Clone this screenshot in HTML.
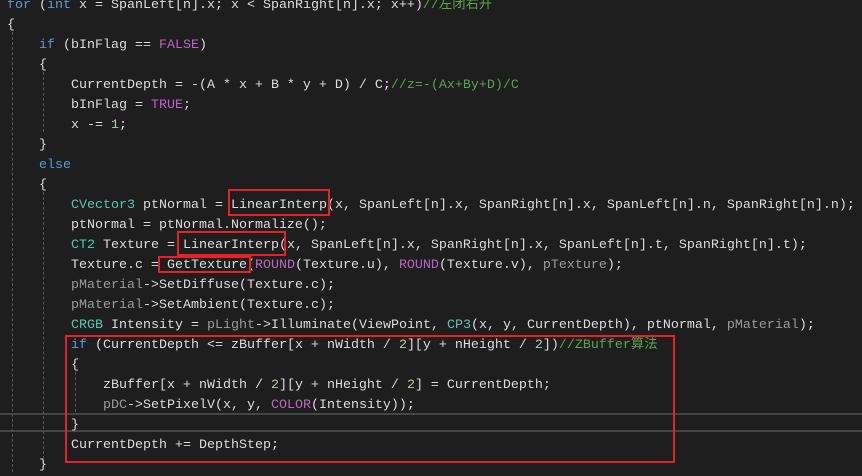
<!DOCTYPE html><html><head><meta charset="utf-8"><style>
body{margin:0;background:#1e1e1e;width:862px;height:472px;overflow:hidden;position:relative;font-family:"Liberation Mono","Noto Sans CJK SC",monospace;font-size:13.33px;color:#dcdcdc}
.w{position:absolute;left:0;top:3px}
.l{position:absolute;left:7px;height:20px;line-height:20px;white-space:pre}
.k{color:#569cd6}.m{color:#bd63c5}.c{color:#57a64a}.t{color:#4ec9b0}.n{color:#b5cea8}.g{color:#9b9b9b}
.b{position:absolute;border:2px solid #e8202a;box-sizing:border-box}
.v{position:absolute;width:0;border-left:1px dashed #555}
.h{position:absolute;left:0;width:862px;height:2px;background:#454545}
</style></head><body>
<div class="h" style="top:413px"></div><div class="h" style="top:430px"></div>
<div class="v" style="left:12px;top:32px;height:440px"></div>
<div class="v" style="left:43px;top:72px;height:60px"></div>
<div class="v" style="left:43px;top:192px;height:272px"></div>
<div class="v" style="left:75px;top:372px;height:40px"></div>
<div class="w">
<div class="l" style="top:-7px"><span class="k">for</span> (<span class="k">int</span> x = SpanLeft[n].x; x &lt; SpanRight[n].x; x++)<span class="c">//左闭右开</span></div>
<div class="l" style="top:13px">{</div>
<div class="l" style="top:33px">    <span class="k">if</span> (bInFlag == <span class="m">FALSE</span>)</div>
<div class="l" style="top:53px">    {</div>
<div class="l" style="top:73px">        CurrentDepth = -(A * x + B * y + D) / C;<span class="c">//z=-(Ax+By+D)/C</span></div>
<div class="l" style="top:93px">        bInFlag = <span class="m">TRUE</span>;</div>
<div class="l" style="top:113px">        x -= <span class="n">1</span>;</div>
<div class="l" style="top:133px">    }</div>
<div class="l" style="top:153px">    <span class="k">else</span></div>
<div class="l" style="top:173px">    {</div>
<div class="l" style="top:193px">        <span class="t">CVector3</span> ptNormal = LinearInterp(x, SpanLeft[n].x, SpanRight[n].x, SpanLeft[n].n, SpanRight[n].n);</div>
<div class="l" style="top:213px">        ptNormal = ptNormal.Normalize();</div>
<div class="l" style="top:233px">        <span class="t">CT2</span> Texture = LinearInterp(x, SpanLeft[n].x, SpanRight[n].x, SpanLeft[n].t, SpanRight[n].t);</div>
<div class="l" style="top:253px">        Texture.c = GetTexture(<span class="m">ROUND</span>(Texture.u), <span class="m">ROUND</span>(Texture.v), <span class="g">pTexture</span>);</div>
<div class="l" style="top:273px">        <span class="g">pMaterial</span>-&gt;SetDiffuse(Texture.c);</div>
<div class="l" style="top:293px">        <span class="g">pMaterial</span>-&gt;SetAmbient(Texture.c);</div>
<div class="l" style="top:313px">        <span class="t">CRGB</span> Intensity = <span class="g">pLight</span>-&gt;Illuminate(ViewPoint, <span class="t">CP3</span>(x, y, CurrentDepth), ptNormal, <span class="g">pMaterial</span>);</div>
<div class="l" style="top:333px">        <span class="k">if</span> (CurrentDepth &lt;= zBuffer[x + nWidth / <span class="n">2</span>][y + nHeight / <span class="n">2</span>])<span class="c">//ZBuffer算法</span></div>
<div class="l" style="top:353px">        {</div>
<div class="l" style="top:373px">            zBuffer[x + nWidth / <span class="n">2</span>][y + nHeight / <span class="n">2</span>] = CurrentDepth;</div>
<div class="l" style="top:393px">            <span class="g">pDC</span>-&gt;SetPixelV(x, y, <span class="m">COLOR</span>(Intensity));</div>
<div class="l" style="top:413px">        }</div>
<div class="l" style="top:433px">        CurrentDepth += DepthStep;</div>
<div class="l" style="top:453px">    }</div>
</div>
<div class="b" style="left:228px;top:189px;width:102px;height:27px"></div>
<div class="b" style="left:177px;top:231px;width:109px;height:25px"></div>
<div class="b" style="left:158px;top:256px;width:93px;height:17px"></div>
<div class="b" style="left:65px;top:335px;width:610px;height:128px"></div>
</body></html>
